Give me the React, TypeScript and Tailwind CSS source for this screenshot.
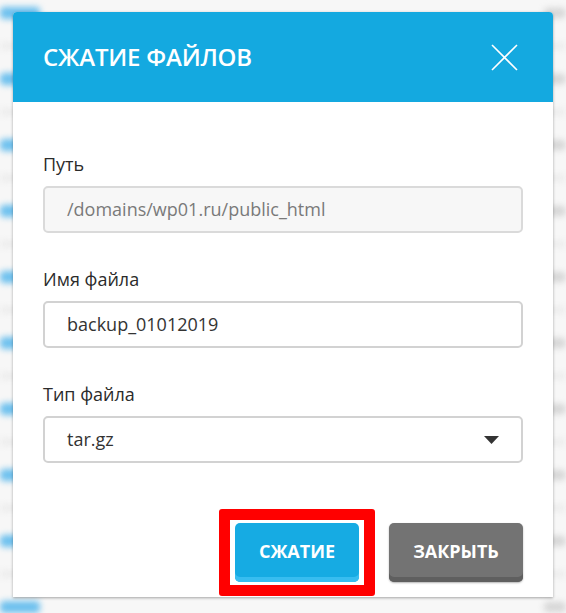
const rows = Array.from({ length: 10 });

function Backdrop() {
  return (
    <div className="-mt-[17px] blur-[3px]">
      {rows.map((_, i) => (
        <div key={i} className="h-[66px] flex items-center justify-between border-b-[6px] border-[#ebebeb]">
          <div className="w-[40px] h-[12px] bg-[#6cc0ee] rounded" />
          <div className="w-[22px] h-[10px] bg-[#d6d6d6] rounded" />
        </div>
      ))}
    </div>
  );
}

function Field({ label, value, disabled, select }: { label: string; value: string; disabled?: boolean; select?: boolean }) {
  return (
    <div className="mb-[34px]">
      <div className="text-[18px] leading-[24px] text-[#2b2b2b] mb-[10px]">{label}</div>
      <div
        className={`h-[47px] border-2 rounded-[5px] flex items-center justify-between pl-[22px] pr-[22px] text-[18px] ${
          disabled ? 'bg-[#f7f7f7] border-[#dadada] text-[#7a7a7a]' : 'bg-white border-[#d2d2d2] text-[#333]'
        }`}
      >
        <span>{value}</span>
        {select && (
          <svg width="15" height="8" viewBox="0 0 15 8">
            <path d="M0 0h15L7.5 8z" fill="#333" />
          </svg>
        )}
      </div>
    </div>
  );
}

export default function App() {
  return (
    <div className="relative w-[566px] h-[613px] bg-[#f7f7f7] overflow-hidden" style={{ fontFamily: '"Open Sans", sans-serif' }}>
      <Backdrop />

      {/* модальное окно */}
      <div className="absolute left-[13px] top-[12px] w-[540px] bg-white rounded-t-[4px] shadow-[0_1px_3px_rgba(0,0,0,0.35)]">
        <div className="h-[90px] bg-[#14a9e0] rounded-t-[4px] flex items-center justify-between pl-[30px] pr-[35px]">
          <span className="text-white text-[24px] font-semibold tracking-[-0.2px]">СЖАТИЕ ФАЙЛОВ</span>
          <svg width="27" height="27" viewBox="0 0 27 27">
            <path d="M1 1L26 26M26 1L1 26" stroke="#fff" strokeWidth="1.6" />
          </svg>
        </div>

        <div className="px-[30px] pt-[50px] pb-[15px]">
          <Field label="Путь" value="/domains/wp01.ru/public_html" disabled />
          <Field label="Имя файла" value="backup_01012019" />
          <Field label="Тип файла" value="tar.gz" select />

          <div className="flex justify-end gap-[30px] mt-[60px]">
            <div className="relative">
              <button className="h-[59px] w-[124px] rounded-[5px] bg-[#16abe3] shadow-[inset_0_-5px_0_#38bdf0] text-white font-bold text-[18px] pb-[2px]">
                СЖАТИЕ
              </button>
              {/* выделение */}
              <div className="absolute -left-[16px] -right-[16px] -top-[14px] -bottom-[14px] border-[11px] border-[#ff0000] rounded-[3px]" />
            </div>
            <button className="h-[59px] w-[134px] rounded-[5px] bg-[#737373] shadow-[inset_0_-5px_0_#5f5f5f,0_1px_2px_rgba(0,0,0,0.3)] text-white font-bold text-[18px] pb-[2px]">
              ЗАКРЫТЬ
            </button>
          </div>
        </div>
      </div>
    </div>
  );
}
